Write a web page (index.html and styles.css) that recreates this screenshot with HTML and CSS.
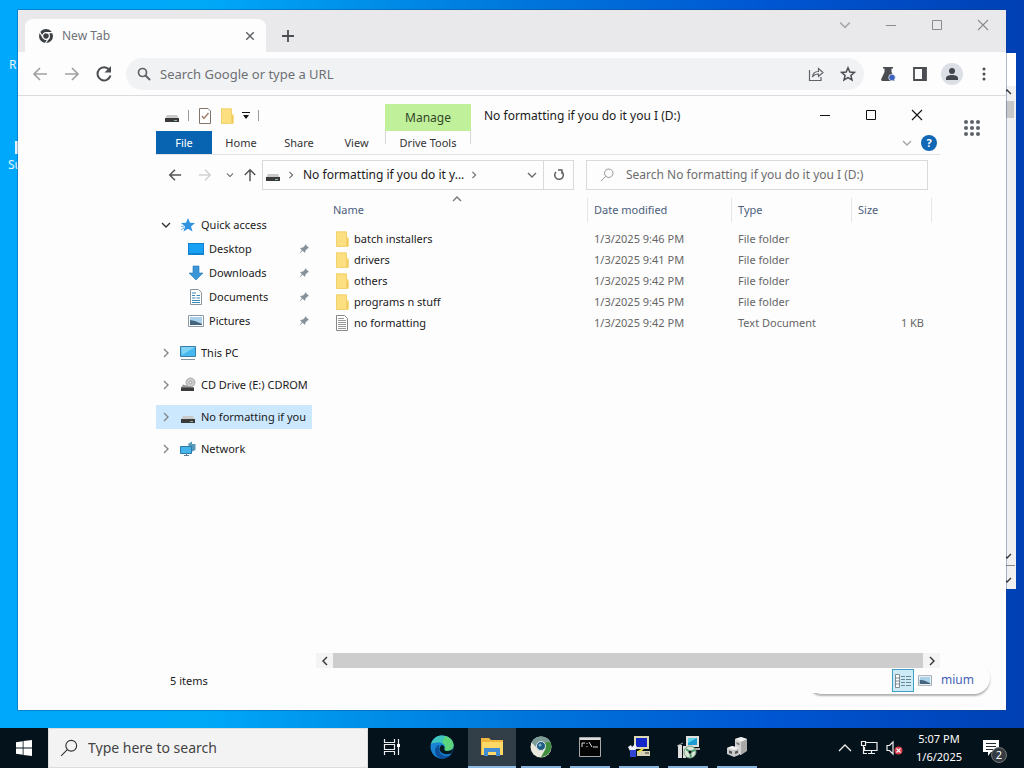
FILE: index.html
```html
<!DOCTYPE html>
<html lang="en">
<head>
<meta charset="utf-8">
<title>Desktop</title>
<link rel="stylesheet" href="styles.css">
</head>
<body>
<svg class="defs" aria-hidden="true">
  <symbol id="drive" viewBox="0 0 16 16"><path d="M3 7h10l1.500 3h-13z" fill="#c9c9c9"/><path d="M1 10h14v4H1z" fill="#3b3b3b"/><path d="M10 12h3v1h-3z" fill="#8fb59b"/></symbol>
  <symbol id="folder" viewBox="0 0 14 16"><path d="M1 .5h10.500v5l2 1v9H1z" fill="#fbdf80"/><path d="M1 .5h1v15H1z" fill="#eec75a"/><path d="M11.500 9l2-2v8.500h-2z" fill="#f0c959"/><path d="M1.500 1h10v14.500h-10z" fill="none" stroke="#f3d16c"/></symbol>
  <symbol id="textfile" viewBox="0 0 14 16"><path d="M1.500 .5h8l3 3v12h-11z" fill="#fff" stroke="#888"/><path d="M3 3.500h6M3 5.500h8M3 7.500h8M3 9.500h8M3 11.500h8M3 13.500h8" stroke="#999"/></symbol>
  <symbol id="pin" viewBox="0 0 12 12"><path d="M7 1l4 4-1.500.5-2 2L7 10 4.700 7.700 1 11l2.800-4L2 5l3-.5 2-2z" fill="#8a9097"/></symbol>
  <symbol id="right" viewBox="0 0 8 10"><path d="M2 1l4 4-4 4" fill="none" stroke="currentColor" stroke-width="1.400"/></symbol>
  <symbol id="down" viewBox="0 0 10 8"><path d="M1 2l4 4 4-4" fill="none" stroke="currentColor" stroke-width="1.400"/></symbol>
  <symbol id="up" viewBox="0 0 10 8"><path d="M1 6l4-4 4 4" fill="none" stroke="currentColor" stroke-width="1.400"/></symbol>
  <symbol id="arrow" viewBox="0 0 16 16"><path d="M15 8H2.500M8 2L2 8l6 6" fill="none" stroke="currentColor" stroke-width="1.700"/></symbol>
  <symbol id="lens" viewBox="0 0 16 16"><circle cx="10" cy="6" r="4.800" fill="none" stroke="currentColor"/><path d="M6.500 9.500L1 15" stroke="currentColor"/></symbol>
  <symbol id="min" viewBox="0 0 12 12"><path d="M1 6.500h10" stroke="currentColor"/></symbol>
  <symbol id="max" viewBox="0 0 12 12"><path d="M1.500 1.500h9v9h-9z" fill="none" stroke="currentColor"/></symbol>
  <symbol id="close" viewBox="0 0 12 12"><path d="M1 1l10 10M11 1L1 11" stroke="currentColor" stroke-width="1.100"/></symbol>
  <symbol id="picture" viewBox="0 0 16 12"><path d="M.5.500h15v11H.5z" fill="#fff" stroke="#8d9aa5"/><path d="M2 2h12v8H2z" fill="#a9d1ec"/><path d="M2 5l5 1 7 3v1H2z" fill="#45647d"/></symbol>
</svg>

<main class="desktop">
  <ul class="shortcuts">
    <li>R</li>
    <li><span class="shortcut-icon"></span>Su</li>
  </ul>

  <section class="back-window">
    <div class="back-scroll">
      <svg width="10" height="8"><use href="#up"/></svg>
      <span class="back-thumb"></span>
      <span class="grow"></span>
      <svg width="10" height="8"><use href="#down"/></svg>
      <span class="back-line"></span>
      <svg width="10" height="8"><use href="#down"/></svg>
    </div>
  </section>

  <section class="browser">
    <header class="tabstrip">
      <div class="tab">
        <svg width="16" height="16" viewBox="0 0 16 16"><circle cx="8" cy="8" r="7" fill="#3c4043"/><circle cx="8" cy="8" r="3.400" fill="#3c4043" stroke="#fff" stroke-width="1.200"/><path d="M8 4.600h7M5 9.700L1.700 4M11 9.700L7.500 15" stroke="#fff" stroke-width="1.200"/></svg>
        <span class="grow">New Tab</span>
        <button aria-label="Close tab"><svg width="10" height="10" viewBox="0 0 12 12"><path d="M1.500 1.500l9 9M10.500 1.500l-9 9" stroke="#5f6368" stroke-width="1.700"/></svg></button>
      </div>
      <button class="newtab" aria-label="New tab"><svg width="14" height="14" viewBox="0 0 14 14"><path d="M7 1v12M1 7h12" stroke="#4a4d51" stroke-width="1.800"/></svg></button>
      <span class="grow"></span>
      <div class="caption">
        <button class="faint" aria-label="Search tabs"><svg width="12" height="10"><use href="#down"/></svg></button>
        <button aria-label="Minimize"><svg width="12" height="12"><use href="#min"/></svg></button>
        <button aria-label="Maximize"><svg width="12" height="12"><use href="#max"/></svg></button>
        <button aria-label="Close"><svg width="12" height="12"><use href="#close"/></svg></button>
      </div>
    </header>
    <div class="toolbar">
      <button class="faded" aria-label="Back"><svg width="16" height="16"><use href="#arrow"/></svg></button>
      <button class="faded flip" aria-label="Forward"><svg width="16" height="16"><use href="#arrow"/></svg></button>
      <button aria-label="Reload"><svg width="18" height="18" viewBox="0 0 18 18"><path d="M14.500 5A6.600 6.600 0 1 0 15.500 10.500" fill="none" stroke="#4a4d51" stroke-width="2"/><path d="M16 1v6.500H9.500z" fill="#4a4d51"/></svg></button>
      <label class="omnibox">
        <svg width="14" height="14" viewBox="0 0 14 14"><circle cx="5.500" cy="5.500" r="4" fill="none" stroke="#5f6368" stroke-width="1.700"/><path d="M8.500 8.500l4.500 4.500" stroke="#5f6368" stroke-width="1.900"/></svg>
        <input type="text" aria-label="Address" placeholder="Search Google or type a URL">
        <svg width="16" height="16" viewBox="0 0 16 16"><path d="M1.500 4v10.500H13V11M4.500 11c.2-4 2.500-5.500 6-5.500V2.500L15 6.500l-4.500 4V8C8 8 6 8.500 4.500 11z" fill="none" stroke="#5f6368" stroke-width="1.200"/></svg>
        <svg width="16" height="16" viewBox="0 0 16 16"><path d="M8 1.800l1.800 4.200 4.600.4-3.500 3 1.100 4.500L8 11.500l-4 2.400 1.100-4.500-3.500-3L6.200 6z" fill="none" stroke="#4a4d51" stroke-width="1.500"/></svg>
      </label>
      <button aria-label="Labs"><svg width="16" height="16" viewBox="0 0 16 16"><path d="M3 1h10v1.500h-1.500V6l3.500 7.500-.8 1.500H1.800L1 13.500 4.500 6V2.500H3z" fill="#4a4d51"/><circle cx="12" cy="11.500" r="3.300" fill="#3d62bd" stroke="#fff" stroke-width=".7"/></svg></button>
      <button aria-label="Side panel"><svg width="16" height="16" viewBox="0 0 16 16"><path d="M2 2h12v12H2z" fill="none" stroke="#4a4d51" stroke-width="1.800"/><path d="M10 2h4v12h-4z" fill="#4a4d51"/></svg></button>
      <button class="avatar" aria-label="Profile"><svg width="14" height="14" viewBox="0 0 14 14"><circle cx="7" cy="4" r="3" fill="#41464d"/><path d="M1 13v-2c0-2 3-3 6-3s6 1 6 3v2z" fill="#41464d"/></svg></button>
      <button aria-label="Menu"><svg width="4" height="14" viewBox="0 0 4 14"><g fill="#4a4d51"><circle cx="2" cy="2" r="1.500"/><circle cx="2" cy="7" r="1.500"/><circle cx="2" cy="12" r="1.500"/></g></svg></button>
    </div>
    <button class="apps" aria-label="Google apps"><svg width="18" height="18" viewBox="0 0 18 18"><g fill="#5f6368"><circle cx="3" cy="3" r="2"/><circle cx="9" cy="3" r="2"/><circle cx="15" cy="3" r="2"/><circle cx="3" cy="9" r="2"/><circle cx="9" cy="9" r="2"/><circle cx="15" cy="9" r="2"/><circle cx="3" cy="15" r="2"/><circle cx="9" cy="15" r="2"/><circle cx="15" cy="15" r="2"/></g></svg></button>
    <button class="customize">mium</button>

    <section class="explorer">
      <header class="titlebar">
        <div class="quick">
          <svg width="16" height="16"><use href="#drive"/></svg>
          <span class="rule"></span>
          <svg class="gap" width="14" height="16" viewBox="0 0 14 16"><path d="M1.500.500H10L12.500 3v12.500h-11z" fill="#fff" stroke="#85766c"/><path d="M4 8l2 2.500L10.500 5" fill="none" stroke="#a07d68" stroke-width="1.400"/></svg>
          <svg width="14" height="16"><use href="#folder"/></svg>
          <svg width="8" height="8" viewBox="0 0 8 8"><path d="M0 .5h8" stroke="#111"/><path d="M1 3h6L4 7z" fill="#111"/></svg>
          <span class="rule"></span>
        </div>
        <div class="manage">Manage</div>
        <h1>No formatting if you do it you I (D:)</h1>
        <div class="caption dark">
          <button aria-label="Minimize"><svg width="12" height="12"><use href="#min"/></svg></button>
          <button aria-label="Maximize"><svg width="12" height="12"><use href="#max"/></svg></button>
          <button aria-label="Close"><svg width="12" height="12"><use href="#close"/></svg></button>
        </div>
      </header>
      <nav class="ribbon">
        <button class="file">File</button>
        <button>Home</button>
        <button>Share</button>
        <button class="view-tab">View</button>
        <button class="tools">Drive Tools</button>
        <span class="grow"></span>
        <svg class="pale" width="10" height="8"><use href="#down"/></svg>
        <button class="help" aria-label="Help">?</button>
      </nav>
      <div class="address">
        <div class="history">
          <button aria-label="Back"><svg width="14" height="14"><use href="#arrow"/></svg></button>
          <button class="off flip" aria-label="Forward"><svg width="14" height="14"><use href="#arrow"/></svg></button>
          <button class="slim" aria-label="Recent"><svg width="8" height="6"><use href="#down"/></svg></button>
          <button class="slim turn" aria-label="Up"><svg width="14" height="14"><use href="#arrow"/></svg></button>
        </div>
        <div class="path">
          <svg width="16" height="16"><use href="#drive"/></svg>
          <svg class="muted" width="8" height="8"><use href="#right"/></svg>
          <span class="crumb">No formatting if you do it y...</span>
          <svg class="muted" width="8" height="8"><use href="#right"/></svg>
          <span class="grow"></span>
          <svg class="muted" width="10" height="8"><use href="#down"/></svg>
          <button class="refresh" aria-label="Refresh"><svg width="12" height="12" viewBox="0 0 12 12"><path d="M8.500 2.500A4.300 4.300 0 1 1 3 3" fill="none" stroke="#5c5c5c" stroke-width="1.500"/><path d="M5 1h4v4" fill="none" stroke="#5c5c5c" stroke-width="1.300"/></svg></button>
        </div>
        <label class="find">
          <svg width="14" height="14"><use href="#lens"/></svg>
          <input type="text" aria-label="Search" placeholder="Search No formatting if you do it you I (D:)">
        </label>
      </div>
      <div class="panes">
        <ul class="tree">
          <li class="open"><svg class="twist" width="10" height="8"><use href="#down"/></svg><svg width="16" height="16" viewBox="0 0 16 16"><path d="M8 1l2 4.800 5 .2-4 3.500 1.500 5L8 11.800 3.500 14.500 5 9.500 1 6l5-.2z" fill="#2f93e0"/><path d="M1 9l3 1M1 13l3-2" stroke="#6ab4ea"/></svg>Quick access</li>
          <li class="sub"><svg width="16" height="16" viewBox="0 0 16 16"><path d="M0 2h16v12H0z" fill="#0d80d0"/><path d="M1 3h14v9H1z" fill="#18a0f5"/></svg><span class="grow">Desktop</span><svg width="12" height="12"><use href="#pin"/></svg></li>
          <li class="sub"><svg width="16" height="16" viewBox="0 0 16 16"><path d="M5 1h6v7h4l-7 7-7-7h4z" fill="#3b96d9" stroke="#2377b4" stroke-width=".6"/></svg><span class="grow">Downloads</span><svg width="12" height="12"><use href="#pin"/></svg></li>
          <li class="sub"><svg width="16" height="16" viewBox="0 0 16 16"><path d="M2.500.500h8l3 3v12h-11z" fill="#fff" stroke="#8c959c"/><path d="M4 4h4M4 6.500h3M8.500 6.500H12M4 9h3.500M8.500 9H12M4 11.500h8M4 13.500h8" stroke="#3b87b5"/></svg><span class="grow">Documents</span><svg width="12" height="12"><use href="#pin"/></svg></li>
          <li class="sub"><svg width="16" height="12"><use href="#picture"/></svg><span class="grow">Pictures</span><svg width="12" height="12"><use href="#pin"/></svg></li>
          <li class="top"><svg class="twist" width="8" height="10"><use href="#right"/></svg><svg width="16" height="16" viewBox="0 0 16 16"><path d="M.5 1.500h15v10H.5z" fill="#47b9ee" stroke="#397ea8"/><path d="M1 2h14L2 10z" fill="#7fd4f8"/><path d="M1 14.500h14" stroke="#83979f"/></svg>This PC</li>
          <li class="top"><svg class="twist" width="8" height="10"><use href="#right"/></svg><svg width="16" height="16" viewBox="0 0 16 16"><circle cx="10.500" cy="5.500" r="4.500" fill="#ccc" stroke="#aaa"/><circle cx="10.500" cy="5.500" r="1.300" fill="#fff" stroke="#999"/><path d="M3 7.500l7 2 4 1.500H1z" fill="#999"/><path d="M1 10.500h13V14H1z" fill="#3b3b3b"/></svg>CD Drive (E:) CDROM</li>
          <li class="top selected"><svg class="twist" width="8" height="10"><use href="#right"/></svg><svg width="16" height="16"><use href="#drive"/></svg>No formatting if you</li>
          <li class="top"><svg class="twist" width="8" height="10"><use href="#right"/></svg><svg width="16" height="16" viewBox="0 0 16 16"><path d="M8 3l4-2.500V3h3.500v6L11 11z" fill="#5a98b8"/><path d="M.5 5.500h11v7H.5z" fill="#45b4ec" stroke="#2b7aa5"/><path d="M4 14.500h5M6.500 12v2" stroke="#5d7f92"/></svg>Network</li>
        </ul>
        <div class="list">
          <svg class="sort" width="10" height="8"><use href="#up"/></svg>
          <table>
            <colgroup><col><col class="c-date"><col class="c-type"><col class="c-size"><col class="c-end"></colgroup>
            <thead><tr><th>Name</th><th>Date modified</th><th>Type</th><th>Size</th><th class="end"></th></tr></thead>
            <tbody>
              <tr><td><svg width="14" height="16"><use href="#folder"/></svg>batch installers</td><td>1/3/2025 9:46 PM</td><td>File folder</td><td></td><td></td></tr>
              <tr><td><svg width="14" height="16"><use href="#folder"/></svg>drivers</td><td>1/3/2025 9:41 PM</td><td>File folder</td><td></td><td></td></tr>
              <tr><td><svg width="14" height="16"><use href="#folder"/></svg>others</td><td>1/3/2025 9:42 PM</td><td>File folder</td><td></td><td></td></tr>
              <tr><td><svg width="14" height="16"><use href="#folder"/></svg>programs n stuff</td><td>1/3/2025 9:45 PM</td><td>File folder</td><td></td><td></td></tr>
              <tr><td><svg width="14" height="16"><use href="#textfile"/></svg>no formatting</td><td>1/3/2025 9:42 PM</td><td>Text Document</td><td>1 KB</td><td></td></tr>
            </tbody>
          </table>
          <div class="hscroll">
            <button aria-label="Scroll left"><svg class="flip" width="8" height="10"><use href="#right"/></svg></button>
            <span class="thumb"></span>
            <button aria-label="Scroll right"><svg width="8" height="10"><use href="#right"/></svg></button>
          </div>
        </div>
      </div>
      <footer class="status">
        <span class="grow">5 items</span>
        <button class="view on" aria-label="Details"><svg width="16" height="14" viewBox="0 0 16 14"><path d="M.5.500h4v13h-4zM.5 4h4M.5 7h4M.5 10h4" fill="#fff" stroke="#7e8b94"/><path d="M6 2.500h4M11 2.500h5M6 5.500h4M11 5.500h5M6 8.500h4M11 8.500h5M6 11.500h4M11 11.500h5" stroke="#6b8797"/></svg></button>
        <button class="view" aria-label="Large icons"><svg width="14" height="11"><use href="#picture"/></svg></button>
      </footer>
    </section>
  </section>
</main>

<footer class="taskbar">
  <button class="start" aria-label="Start"><svg width="16" height="16" viewBox="0 0 16 16"><path d="M0 2.200l6.700-1v6.400H0zM7.500 1.100L16 0v7.600H7.500zM0 8.400h6.700v6.400L0 13.800zM7.500 8.400H16V16l-8.500-1.100z" fill="#fff"/></svg></button>
  <label class="search"><svg width="18" height="18"><use href="#lens"/></svg><input type="text" aria-label="Search" placeholder="Type here to search"></label>
  <button class="app task" aria-label="Task view"><svg width="18" height="18" viewBox="0 0 18 18"><path d="M1.500 1v3.500h10V1M1.500 17v-3.500h10V17M1.500 6.500h10v5h-10zM15.500 1v16" fill="none" stroke="#eee" stroke-width="1.200"/><path d="M14 6h3v3h-3z" fill="#fff"/></svg></button>
  <button class="app edge" aria-label="Edge"><svg width="24" height="24" viewBox="0 0 24 24"><circle cx="12" cy="12" r="11.500" fill="#1683d3"/><path d="M1 9C3 3 7 .5 12 .5c7 0 11.500 4.500 11.500 9.500 0 4-3 6-6.500 6-2 0-3-.8-2.500-2 1.500-4-2-6.500-6-6.500C5.500 7.500 3 8 1 9z" fill="#3fc5bd"/><path d="M15 1c5 1 8.500 5 8.500 9 0 4-3 6-6.500 6-2 0-3-.8-2.500-2 1.500-3 0-5-2-6z" fill="#5bd47c"/><path d="M9.500 10c-2 5 1 11 7 11 2 0 4-1 5-2.500-2 4-6 5-9.500 5C6 23 4 17 5.500 13c.8-2 2.500-3 4-3z" fill="#0c4f9c"/><path d="M14.500 14c-.5 1.200.5 2 2.500 2 2.500 0 5-1 6-2.500 0 2-1 4-2 5-5 2-10.500 0-11.500-4 0-2 .8-3.500 2-4.500 2 0 3.500 2 3 4z" fill="#041922"/></svg></button>
  <button class="app active" aria-label="File Explorer"><svg width="24" height="20" viewBox="0 0 24 20"><path d="M1 1h8l2 2h12v15H1z" fill="#efb73e"/><path d="M2 5h21v13H2z" fill="#ffd968"/><path d="M4 19v-8h16v8h-4v-4H8v4z" fill="#438bd2"/></svg></button>
  <button class="app running" aria-label="Chromium"><svg width="22" height="22" viewBox="0 0 22 22"><circle cx="11" cy="11" r="10.500" fill="#e9e8dc"/><path d="M1.500 6.500C6-2 18-1 21 7L11 6 7 12z" fill="#7d9c96"/><path d="M14 6.500l6.500-.5c3 7-2 15-9.500 15l4.500-8z" fill="#3f8d3f"/><circle cx="11" cy="10" r="4.500" fill="#235c83" stroke="#d7e5ea"/><circle cx="10" cy="9" r="1.500" fill="#7db3cb"/></svg></button>
  <button class="app running" aria-label="Command Prompt"><svg width="22" height="20" viewBox="0 0 22 20"><path d="M.5.500h21v19H.5z" fill="#050505" stroke="#aaa"/><path d="M1 2h20" stroke="#ddd" stroke-width="2"/><path d="M3 6v4M3 6h3M8 6v1M8 9v1M10 5l3 5M14 10h5" stroke="#ddd"/></svg></button>
  <button class="app running" aria-label="Remote setup"><svg width="24" height="24" viewBox="0 0 24 24"><path d="M7 1h15v13H7z" fill="#ddd8b4"/><path d="M9 3h11v9H9z" fill="#1326c8"/><path d="M10 16h13v5H10z" fill="#d6d2b5"/><path d="M18 18h4" stroke="#333"/><path d="M1 12l3-2 1 2 3-3 2 3-2 4v6H3v-6z" fill="#eef" /><path d="M3 15h6v7H3z" fill="#3045d4"/><path d="M11 17l5-3" stroke="#eee43c" stroke-width="2"/></svg></button>
  <button class="app running" aria-label="Installer"><svg width="24" height="24" viewBox="0 0 24 24"><path d="M10 1h13v11H10z" fill="#e0e1dc"/><path d="M12 3h9v7h-9z" fill="#1c9cd2"/><path d="M12 3h9l-9 5z" fill="#5fd2e9"/><path d="M14 13h10v2H14z" fill="#aaa"/><path d="M2 10h4v13H2zM7 11h3v12H7z" fill="#e0dfdd"/><path d="M1 11l6-3" stroke="#aaa"/><circle cx="14" cy="17" r="6" fill="#d9e5d8" stroke="#779f7d"/><path d="M14 17l-4-3M14 17l5-2M14 17l1 5" stroke="#53a077" stroke-width="2"/><circle cx="14" cy="17" r="1.500" fill="#111"/></svg></button>
  <button class="app running" aria-label="Device"><svg width="22" height="22" viewBox="0 0 22 22"><path d="M9 3l6-2 6 2v12l-6 4-6-3z" fill="#a9a9a9"/><path d="M9 3l6-2 6 2-6 3z" fill="#eee"/><path d="M9 3l6 3v13l-6-3z" fill="#d4d4d4"/><path d="M10.500 6l3 1.500v2l-3-1.500z" fill="#777"/><path d="M1 12l5-2 7 2v7l-5 2-7-3z" fill="#c9c9c9"/><path d="M1 12l5-2 7 2-5 2z" fill="#f1f1f1"/><path d="M3 14.500l3 1v2.500l-3-1zM9 15.500l3-1V17l-3 1z" fill="#555"/></svg></button>
  <span class="grow"></span>
  <div class="tray">
    <svg width="14" height="10" viewBox="0 0 14 10"><path d="M1 8l6-6 6 6" fill="none" stroke="#eee" stroke-width="1.300"/></svg>
    <svg width="18" height="16" viewBox="0 0 18 16"><path d="M5 2.500h12v8H4.500V7M8 13.500h7M11.500 11v2.500M1.500 1.500h4v4h-4zM3.500 5.500v8H7" fill="none" stroke="#eee" stroke-width="1.200"/></svg>
    <svg width="17" height="16" viewBox="0 0 17 16"><path d="M1 5.500h2.500L7 2v12l-3.500-3.500H1z" fill="none" stroke="#eee" stroke-width="1.200"/><circle cx="12.500" cy="10.500" r="4" fill="#d63c4a"/><path d="M10.500 8.500l4 4M14.500 8.500l-4 4" stroke="#fff" stroke-width="1.100"/></svg>
  </div>
  <time class="clock"><span>5:07 PM</span><span>1/6/2025</span></time>
  <button class="notify" aria-label="Notifications"><svg width="18" height="18" viewBox="0 0 18 18"><path d="M1 1h16v12H9l-3 4v-4H1z" fill="#fff"/><path d="M4 4.500h10M4 7.500h10M4 10.500h7" stroke="#222c35"/></svg><span class="count">2</span></button>
</footer>
</body>
</html>
```
FILE: styles.css
```css
* { box-sizing: border-box; }
body {
  margin: 0;
  height: 100vh;
  display: flex;
  flex-direction: column;
  overflow: hidden;
  font-family: "Noto Sans", "Open Sans", sans-serif;
  font-size: 12px;
  line-height: 16px;
  color: #1a1a1a;
}
button, input { font: inherit; color: inherit; border: 0; padding: 0; background: none; }
button { display: flex; align-items: center; justify-content: center; }
input { flex: 1; min-width: 0; outline: 0; }
ul { list-style: none; margin: 0; padding: 0; }
svg { flex: none; }
.defs { position: absolute; width: 0; height: 0; }
.grow { flex: 1; }
.muted { color: #6b6b6b; }
.pale { color: #a5a5a5; }
.flip { transform: scaleX(-1); }
.turn { transform: rotate(90deg); }

.desktop {
  flex: 1;
  position: relative;
  background:
    linear-gradient(90deg, #00a8fb 0%, #00a8f8 20%, #0078dc 50%, #0056d2 75%, #0040b4 100%);
}
.shortcuts { padding: 57px 0 0 9px; color: #e4f4ff; width: 40px; }
.shortcuts li + li { margin-top: 68px; margin-left: -1px; display: grid; gap: 3px; }
.shortcut-icon { width: 12px; height: 13px; margin-left: 7px; background: #e4f0fa; }

.back-window {
  position: absolute;
  top: 53px; right: 8px; bottom: 139px;
  width: 200px;
  display: flex;
  justify-content: flex-end;
  padding-top: 33px;
  background: #fff;
}
.back-scroll {
  width: 17px;
  display: flex;
  flex-direction: column;
  align-items: center;
  gap: 5px;
  padding: 2px 2px 5px 0;
  background: #f0f0f0;
  color: #333;
}
.back-thumb { width: 15px; height: 17px; background: #c8c8c8; }
.back-line { width: 17px; height: 1px; margin-bottom: 5px; background: #8a8a8a; }

.browser {
  position: absolute;
  inset: 10px 18px 18px 18px;
  display: flex;
  flex-direction: column;
  background: #fdfdfe;
  box-shadow: 0 0 0 1px rgba(20, 60, 120, .35);
}
.tabstrip { display: flex; height: 42px; padding-left: 7px; background: #e9e9ec; }
.tab {
  display: flex;
  align-items: center;
  gap: 8px;
  width: 241px;
  margin-top: 9px;
  padding: 0 11px 0 13px;
  border-radius: 8px 8px 0 0;
  background: #fdfdfe;
  color: #6f7378;
}
.newtab { width: 44px; padding-top: 10px; }
.caption { display: flex; height: 30px; color: #8b8b8e; }
.caption button { width: 46px; }
.caption .faint { color: #a9a9ac; }
.caption.dark { height: 36px; color: #111; }
.toolbar {
  display: flex;
  align-items: center;
  height: 44px;
  padding: 0 6px;
  border-bottom: 1px solid #dadce0;
}
.toolbar button { width: 32px; height: 32px; }
.faded { opacity: .4; }
.omnibox {
  flex: 1;
  display: flex;
  align-items: center;
  gap: 16px;
  height: 32px;
  margin: 0 8px 0 6px;
  padding: 0 8px 0 11px;
  border-radius: 16px;
  background: #f1f2f3;
}
.omnibox input { font-size: 13px; margin-left: -7px; }
.omnibox input::placeholder { color: #6c7075; opacity: 1; }
.toolbar .avatar { width: 22px; height: 22px; margin: 0 5px; border-radius: 50%; background: #dcdfe6; }
.apps { position: absolute; top: 109px; right: 25px; }
.customize {
  position: absolute;
  right: 16px; bottom: 16px;
  width: 184px; height: 32px;
  justify-content: flex-end;
  padding: 3px 16px 0 0;
  border-radius: 16px;
  background: #fdfdfe;
  box-shadow: 0 2px 2px rgba(0, 0, 0, .3);
  color: #4562b4;
}

.explorer {
  position: absolute;
  inset: 87px 66px 17px 138px;
  display: flex;
  flex-direction: column;
  background: #fdfdfe;
}
.titlebar { display: flex; height: 34px; }
.quick { display: flex; align-items: center; width: 229px; padding: 3px 0 0 8px; gap: 8px; }
.quick .rule { width: 1px; height: 11px; background: #999; }
.quick .rule + .gap { margin-left: 1px; }
.manage {
  width: 86px;
  margin-top: 7px;
  padding-top: 6px;
  text-align: center;
  background: #c0f09a;
  color: #33472a;
}
h1 { flex: 1; margin: 0; padding: 11px 0 0 13px; font-size: 12px; font-weight: 400; white-space: nowrap; }
.ribbon {
  display: flex;
  align-items: center;
  height: 24px;
  border-bottom: 1px solid #e2e2e4;
  font-size: 11px;
  color: #333;
}
.ribbon button { width: 58px; height: 23px; }
.ribbon .file { width: 56px; background: #0863b1; color: #fff; }
.ribbon .view-tab { width: 57px; }
.ribbon .tools {
  width: 86px;
  background:
    linear-gradient(#d6d6d9, #d6d6d9) 0 0 / 1px 13px no-repeat,
    linear-gradient(#d6d6d9, #d6d6d9) 100% 0 / 1px 13px no-repeat;
}
.ribbon .help {
  width: 16px; height: 16px;
  margin: 0 3px 0 9px;
  border-radius: 50%;
  background: #1067b5;
  color: #fff;
  font-weight: 700;
}
.address { display: flex; align-items: center; height: 40px; padding-right: 12px; }
.history { display: flex; width: 106px; padding-left: 4px; color: #555; }
.history button { width: 30px; }
.history .slim { width: 20px; }
.history .off { opacity: .25; }
.path {
  display: flex;
  align-items: center;
  gap: 6px;
  width: 312px; height: 30px;
  margin-right: 12px;
  padding-left: 2px;
  border: 1px solid #d9d9dc;
  white-space: nowrap;
}
.crumb { padding-left: 2px; }
.refresh { width: 30px; height: 28px; border-left: 1px solid #d9d9dc; }
.find {
  flex: 1;
  display: flex;
  align-items: center;
  gap: 12px;
  height: 30px;
  padding-left: 13px;
  border: 1px solid #d9d9dc;
  color: #888;
}
.find input::placeholder { color: #6d6d6d; opacity: 1; }

.panes { flex: 1; display: flex; gap: 4px; min-height: 0; font-size: 11px; }
.tree { width: 156px; padding-top: 18px; }
.tree li {
  display: flex;
  align-items: center;
  gap: 5px;
  height: 24px;
  padding-left: 5px;
  white-space: nowrap;
}
.twist { color: #858585; margin-right: 4px; }
.tree .open .twist { color: #333; }
.tree .sub { padding: 0 2px 0 32px; }
.tree .top { margin-top: 8px; padding-left: 6px; }
.tree .top .twist { margin-right: 5px; }
.tree .selected { background: #cce8ff; }

.list { flex: 1; position: relative; display: flex; flex-direction: column; justify-content: space-between; }
.sort { position: absolute; left: 136px; top: 0; color: #777; }
table { width: 100%; table-layout: fixed; border-collapse: collapse; color: #666; }
.c-date { width: 144px; }
.c-type { width: 120px; }
.c-size { width: 80px; }
.c-end { width: 9px; }
th { height: 33px; padding: 0 7px 4px; text-align: left; font-weight: 400; color: #4c607a; background: linear-gradient(#e5e5e8, #e5e5e8) 0 3px / 1px 24px no-repeat; }
th:first-child { padding-left: 17px; background: none; }
th.end { padding: 0; }
td { height: 21px; padding: 0 7px; white-space: nowrap; }
td:first-child { display: flex; align-items: center; gap: 5px; padding-left: 19px; color: #1a1a1a; }
td:nth-child(4) { text-align: right; }
td:last-child { padding: 0; }
.hscroll { display: flex; height: 15px; color: #333; }
.hscroll button { width: 17px; background: #f4f4f4; }
.hscroll .thumb { flex: 1; background: #cdcdcd; }
.status { display: flex; align-items: center; height: 25px; padding: 0 4px 0 14px; font-size: 11px; }
.view { width: 22px; height: 23px; }
.view.on { border: 1px solid #3f9fc4; background: #cdeaf7; }

.taskbar { display: flex; height: 40px; background: #04121b; color: #fff; }
.start { width: 48px; }
.search {
  display: flex;
  align-items: center;
  gap: 10px;
  width: 320px;
  padding-left: 11px;
  border: 1px solid #dcdcdc;
  background: #f3f3f3;
  color: #333;
}
.search input { font-size: 14px; }
.search input::placeholder { color: #444; opacity: 1; }
.app { width: 49px; border-bottom: 2px solid transparent; }
.app.task { width: 48px; }
.app.edge { width: 52px; }
.app.active { width: 48px; background: #333f48; border-color: #8dbbe4; }
.app.running { background: linear-gradient(#86b3dc, #86b3dc) center bottom / 40px 2px no-repeat border-box; }
.tray { display: flex; align-items: center; gap: 8px; padding-right: 13px; }
.clock { display: flex; flex-direction: column; width: 46px; align-items: center; justify-content: center; font-size: 11px; line-height: 18px; white-space: nowrap; }
.notify { position: relative; width: 62px; padding-right: 4px; }
.count {
  position: absolute;
  left: 29px; top: 19px;
  width: 16px; height: 16px;
  border-radius: 50%;
  background: #343b42;
  border: 1px solid #777;
  font-size: 11px;
  line-height: 14px;
}
```
